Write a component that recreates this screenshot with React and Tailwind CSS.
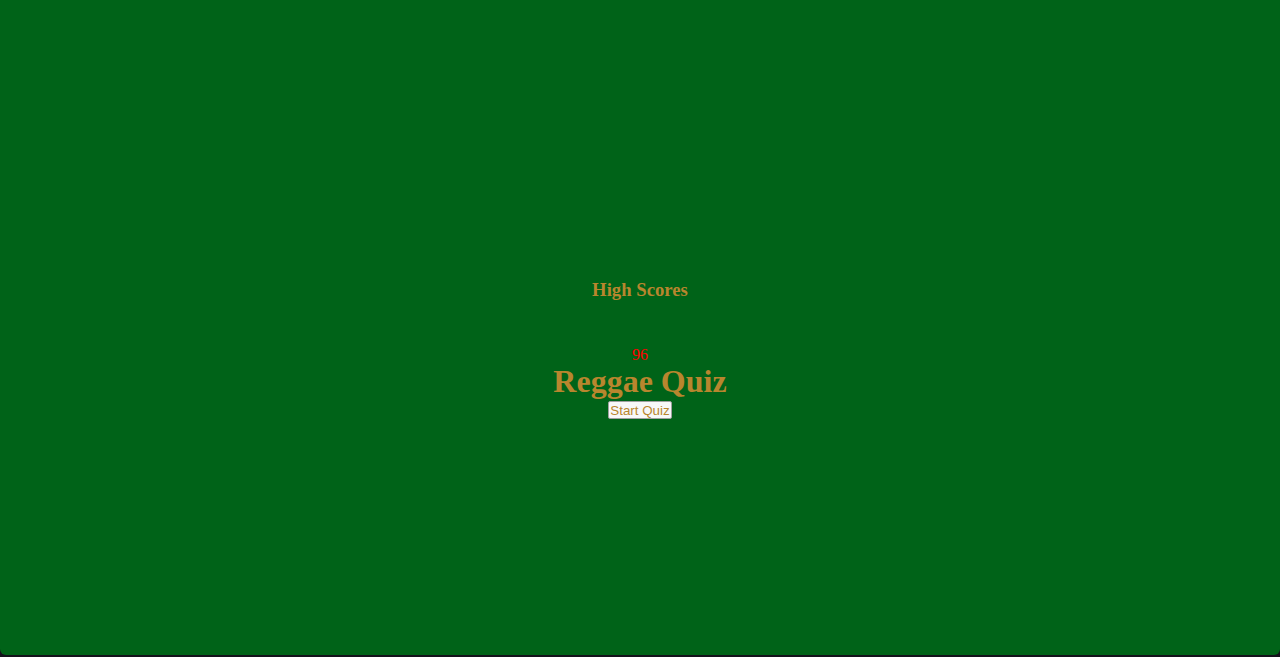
import React from "react";

const App = () => {
  return (
    <div className="w-full h-[657px] bg-[#14121c] overflow-hidden">
      <div className="w-full h-[655px] bg-[#006318] rounded-b-[6px] flex flex-col items-center font-['Liberation_Serif',serif] text-[#b8862e]">
        <h3 className="mt-[279px] text-[18.72px] leading-[22px] font-bold">High Scores</h3>
        <div className="mt-[45px] text-[16px] leading-[17px] text-[#ff0000]">96</div>
        <h1 className="text-[32px] leading-[37px] font-bold">Reggae Quiz</h1>
        <button className="mt-[1px] h-[18px] px-[1.5px] bg-[#f8f8f8] border border-[#a0a0a0] rounded-[2px] font-['Liberation_Sans',sans-serif] text-[13.33px] leading-[15px] text-[#b8862e]">
          Start Quiz
        </button>
      </div>
    </div>
  );
};

export default App;
